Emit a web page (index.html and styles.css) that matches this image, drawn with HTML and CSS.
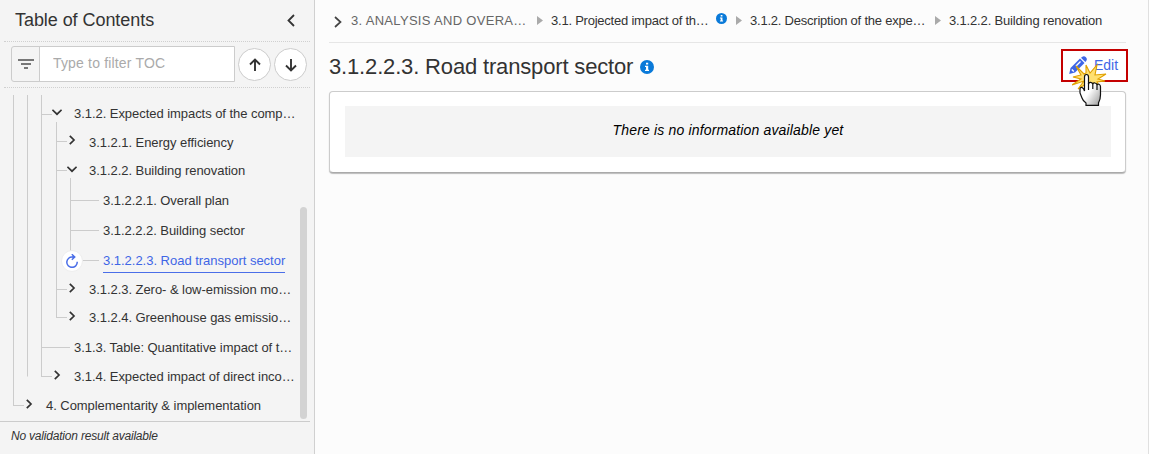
FILE: index.html
```html
<!DOCTYPE html>
<html lang="en">
<head>
    <meta charset="UTF-8">
    <meta name="viewport" content="width=device-width, initial-scale=1.0">
    <title>Road transport sector</title>
    <link rel="stylesheet" href="styles.css">
</head>
<body>
    <svg class="defs" width="0" height="0">
        <symbol id="right" viewBox="0 0 10 10"><path d="M2.8 .8 7 5 2.8 9.2" fill="none" stroke="currentColor" stroke-width="1.7"/></symbol>
        <symbol id="down" viewBox="0 0 10 10"><path d="M.4 2.8 5 7.2 9.6 2.8" fill="none" stroke="currentColor" stroke-width="1.7"/></symbol>
        <symbol id="info" viewBox="0 0 14 14"><circle cx="7" cy="7" r="7" fill="#0a7ad9"/><path d="M6 2.7h2.2v1.9H6zM5 5.7h3.2v4H9v1.2H5V9.7h1V6.9H5z" fill="#fff"/></symbol>
        <symbol id="play" viewBox="0 0 6 9"><path d="M0 0 6 4.5 0 9z" fill="#aaa"/></symbol>
    </svg>
    <div class="app">
        <aside class="sidebar">
            <div class="toc-header">
                <h2>Table of Contents</h2>
                <svg class="collapse" viewBox="0 0 8 13"><path d="M7 1 1.5 6.5 7 12" fill="none" stroke="#333" stroke-width="1.8"/></svg>
            </div>
            <div class="toc-filter">
                <div class="filter-box">
                    <span class="filter-icon">
                        <svg width="16" height="10" viewBox="0 0 16 10"><path d="M0 1h16M3 5h10M6 9h4" stroke="#777" stroke-width="1.8"/></svg>
                    </span>
                    <input type="text" placeholder="Type to filter TOC">
                </div>
                <button class="round"><svg width="14" height="14" viewBox="0 0 14 14"><path d="M7 13V1.5M2 6.5l5-5 5 5" fill="none" stroke="#333" stroke-width="1.9"/></svg></button>
                <button class="round"><svg width="14" height="14" viewBox="0 0 14 14"><path d="M7 1v11.5M2 7.5l5 5 5-5" fill="none" stroke="#333" stroke-width="1.9"/></svg></button>
            </div>
            <div class="toc-body">
                <div class="tree">
                    <div class="row first"><i class="g line"></i><i class="g line"></i><i class="g tee"></i><span class="arrow open"><svg><use href="#down"/></svg></span><span class="label">3.1.2. Expected impacts of the comp…</span></div>
                    <div class="row"><i class="g line"></i><i class="g line"></i><i class="g line wide"></i><i class="g tee"></i><span class="arrow"><svg><use href="#right"/></svg></span><span class="label low">3.1.2.1. Energy efficiency</span></div>
                    <div class="row"><i class="g line"></i><i class="g line"></i><i class="g line wide"></i><i class="g tee"></i><span class="arrow open inner"><svg><use href="#down"/></svg></span><span class="label">3.1.2.2. Building renovation</span></div>
                    <div class="row leaf"><i class="g line"></i><i class="g line"></i><i class="g line wide"></i><i class="g line"></i><i class="g tee"></i><span class="label">3.1.2.2.1. Overall plan</span></div>
                    <div class="row leaf"><i class="g line"></i><i class="g line"></i><i class="g line wide"></i><i class="g line"></i><i class="g tee"></i><span class="label">3.1.2.2.2. Building sector</span></div>
                    <div class="row leaf"><i class="g line"></i><i class="g line"></i><i class="g line wide"></i><i class="g line"></i><i class="g end"></i><span class="label active">3.1.2.2.3. Road transport sector</span>
                        <span class="reload"><svg width="14" height="14" viewBox="0 0 14 14"><path d="M7.6 3A5.2 5.2 0 1 0 12.2 7.8" fill="none" stroke="#4a6ee8" stroke-width="1.5"/><path d="M6.8.2 9.8 3 6.8 5.8M9.4 3H7" fill="none" stroke="#4a6ee8" stroke-width="1.4"/></svg></span>
                    </div>
                    <div class="row short"><i class="g line"></i><i class="g line"></i><i class="g line wide"></i><i class="g tee"></i><span class="arrow"><svg><use href="#right"/></svg></span><span class="label">3.1.2.3. Zero- &amp; low-emission mo…</span></div>
                    <div class="row"><i class="g line"></i><i class="g line"></i><i class="g line wide"></i><i class="g end"></i><span class="arrow"><svg><use href="#right"/></svg></span><span class="label">3.1.2.4. Greenhouse gas emissio…</span></div>
                    <div class="row leaf"><i class="g line"></i><i class="g line"></i><i class="g tee"></i><span class="label">3.1.3. Table: Quantitative impact of t…</span></div>
                    <div class="row"><i class="g line"></i><i class="g line half"></i><i class="g end"></i><span class="arrow"><svg><use href="#right"/></svg></span><span class="label">3.1.4. Expected impact of direct inco…</span></div>
                    <div class="row short"><i class="g end"></i><span class="arrow"><svg><use href="#right"/></svg></span><span class="label">4. Complementarity &amp; implementation</span></div>
                </div>
                <div class="scrollbar"></div>
            </div>
            <div class="validation">No validation result available</div>
        </aside>

        <main class="content">
            <nav class="breadcrumb">
                <svg class="crumb-open" viewBox="0 0 8 12"><path d="M1 1l5.5 5L1 11" fill="none" stroke="#444" stroke-width="1.7"/></svg>
                <span class="crumb root">3. ANALYSIS AND OVERA…</span>
                <svg class="play"><use href="#play"/></svg>
                <span class="crumb second">3.1. Projected impact of th…</span>
                <svg class="info-small"><use href="#info"/></svg>
                <svg class="play"><use href="#play"/></svg>
                <span class="crumb third">3.1.2. Description of the expe…</span>
                <svg class="play"><use href="#play"/></svg>
                <span class="crumb">3.1.2.2. Building renovation</span>
            </nav>
            <div class="title-bar">
                <h1>3.1.2.2.3. Road transport sector</h1>
                <svg class="info"><use href="#info"/></svg>
                <a class="edit" href="#">
                    <svg width="19" height="19" viewBox="0 0 19 19"><path d="M1.5 12 11 2.5 15.5 7 6 16.5 .2 18z" fill="#3f66e6"/><path d="M12 1.8 13 .9q2-1.6 3.9.3 1.8 1.9.3 3.8L16.3 6z" fill="#3f66e6"/><path d="M7 10l4.5-4.5M2.8 13.4l2 2" stroke="#fff" stroke-width="1.4"/></svg>
                    <span>Edit</span>
                </a>
                <svg class="pointer" width="38" height="54" viewBox="0 0 38 54">
                    <defs><linearGradient id="hand" x1="0" y1="0" x2="1" y2="1"><stop offset=".5" stop-color="#fff"/><stop offset="1" stop-color="#999"/></linearGradient></defs>
                    <path d="M12 17 4 9 9 18 1 20 9 22 0 28 12 24 6 32 14 27 12 35 17 29 22 26 28 31 25 25 33 24 26 22 34 17 23 18 25 8 18 16 14 8 14 16z" fill="#ffe070" stroke="#e0a000" stroke-width="1.1"/>
                    <path d="M12.5 34V20q0-2.500 2-2.500t2 2.500v7q.5-2 2.300-1.600 1.700.3 2 1.800.5-1.700 2.200-1.200 1.800.4 2 2 .4-1.200 2-.7 1.500.6 1.500 2.500v8q0 5-2 8v2.500H14V46q-3-2-4-5l-2-5V32q.5-2.500 2.500-1.200 1.500 1 2 3.200z" fill="url(#hand)" stroke="#111" stroke-width="1.2"/>
                    <path d="M16.5 26v7M20.8 27v5M25 28v5" stroke="#111" stroke-width="1.2" fill="none"/>
                </svg>
            </div>
            <section class="card">
                <div class="empty">There is no information available yet</div>
            </section>
        </main>
    </div>
</body>
</html>
```
FILE: styles.css
```css
* {
    box-sizing: border-box;
}

body {
    margin: 0;
    font-family: "Liberation Sans", Arial, sans-serif;
    font-size: 13px;
    color: #333;
    overflow: hidden;
}

.defs {
    display: block;
}

.app {
    display: flex;
    width: 1149px;
    height: 454px;
    background: #fcfcfc;
}

.sidebar {
    display: flex;
    flex-direction: column;
    width: 315px;
    background: #f4f4f4;
    border-right: 1px solid #d0d0d0;
}

.toc-header {
    display: flex;
    align-items: center;
    justify-content: space-between;
    height: 42px;
    margin: 0 4px;
    padding: 0 15px 0 11px;
    border-bottom: 1px dotted #d0d0d0;
}

.toc-header h2 {
    margin: 0;
    font-size: 18px;
    font-weight: normal;
    letter-spacing: -0.06px;
}

.collapse {
    width: 8px;
    height: 13px;
}

.toc-filter {
    display: flex;
    align-items: center;
    gap: 3px;
    height: 46px;
    margin: 0 4px;
    padding-left: 7px;
    border-bottom: 1px dotted #d0d0d0;
}

.filter-box {
    display: flex;
    width: 224px;
    height: 36px;
    margin-top: -1px;
    border: 1px solid #ccc;
    border-radius: 3px 0 0 3px;
}

.filter-icon {
    display: flex;
    align-items: center;
    justify-content: center;
    width: 28px;
    border-right: 1px solid #ccc;
}

.filter-box input {
    width: 194px;
    padding: 0 13px 3px;
    border: none;
    background: #fff;
    font: 14px "Liberation Sans", Arial, sans-serif;
    letter-spacing: 0.17px;
}

.filter-box input::placeholder {
    color: #aaa;
}

.round {
    display: flex;
    align-items: center;
    justify-content: center;
    width: 33px;
    height: 33px;
    padding: 0;
    border: 1px solid #ccc;
    border-radius: 50%;
    background: #fff;
}

.toc-body {
    display: flex;
    justify-content: space-between;
    height: 333px;
    padding: 7px 7px 0 0;
}

.tree {
    width: 300px;
    padding-left: 13px;
}

.row {
    position: relative;
    display: flex;
    align-items: center;
    height: 29px;
    white-space: nowrap;
}

.row.first {
    height: 32px;
    padding-top: 5px;
}

.row.short {
    height: 28px;
}

.row.leaf {
    height: 30px;
}

/* guide lines of the tree */
.g {
    flex: none;
    align-self: stretch;
    width: 14px;
    background: linear-gradient(#ccc, #ccc) 0 0 / 1px 100% no-repeat;
}

.g.wide {
    width: 15px;
}

.g.half {
    background-size: 1px 50%;
}

.g.tee,
.g.end {
    width: 11px;
    background: linear-gradient(#ccc, #ccc) 0 0 / 1px 100% no-repeat,
        linear-gradient(#ccc, #ccc) 0 50% / 100% 1px no-repeat;
}

.g.end {
    background-size: 1px 50%, 100% 1px;
}

.leaf .tee,
.leaf .end {
    width: 29px;
}

.first .g {
    margin-top: -5px;
}

.first .g.tee {
    background-position: 0 0, 0 19px;
}

.arrow {
    flex: none;
    align-self: stretch;
    display: flex;
    align-items: center;
    width: 18px;
    padding-bottom: 3px;
}

.arrow svg {
    width: 10px;
    height: 10px;
}

.arrow.open {
    background: linear-gradient(#ccc, #ccc) 4px 22px / 1px 100% no-repeat;
}

.arrow.inner {
    background-position: 3px 22px;
}

.label {
    margin-left: 4px;
    letter-spacing: -0.05px;
}

.label.low {
    padding-top: 2px;
}

.label.active {
    align-self: stretch;
    height: 28px;
    line-height: 31px;
    color: #3f66e6;
    border-bottom: 1px solid #4a6ee8;
    letter-spacing: -0.02px;
}

.reload {
    position: absolute;
    left: 61px;
    top: 5px;
    display: flex;
    align-items: center;
    justify-content: center;
    width: 22px;
    height: 22px;
    margin-left: -13px;
    border: 1px solid #eee;
    border-radius: 50%;
    background: #fff;
}

.scrollbar {
    width: 7px;
    height: 212px;
    margin-top: 112px;
    border-radius: 4px;
    background: #d3d3d3;
}

.validation {
    width: 310px;
    padding: 7px 11px;
    border-top: 1px solid #ccc;
    font-size: 12px;
    font-style: italic;
    letter-spacing: -0.2px;
}

.content {
    width: 834px;
    padding: 0 22px 0 14px;
    border-right: 1px solid #e0e0e0;
}

.breadcrumb {
    display: flex;
    align-items: center;
    height: 43px;
    padding: 0 0 2px 5px;
    border-bottom: 1px solid #e6e6e6;
    white-space: nowrap;
}

.breadcrumb > * {
    flex: none;
}

.crumb {
    letter-spacing: -0.16px;
}

.crumb-open {
    width: 8px;
    height: 12px;
    margin: 3px 9px 0 0;
}

.crumb.root {
    width: 186px;
    color: #666;
    letter-spacing: 0.31px;
}

.crumb.second {
    width: 165px;
    letter-spacing: -0.23px;
}

.crumb.third {
    width: 185px;
    letter-spacing: -0.22px;
}

.play {
    width: 6px;
    height: 9px;
    margin: 1px 8px 0 0;
}

.info-small {
    width: 11px;
    height: 11px;
    margin: 0 9px 3px 0;
}

.title-bar {
    position: relative;
    display: flex;
    align-items: center;
    height: 48px;
}

.title-bar h1 {
    margin: 0;
    font-size: 22px;
    font-weight: normal;
    letter-spacing: -0.16px;
}

.info {
    width: 14px;
    height: 14px;
    margin-left: 7px;
}

.edit {
    display: flex;
    align-items: center;
    gap: 6px;
    width: 67px;
    height: 33px;
    margin: -3px -2px 0 auto;
    padding: 0 0 1px 6px;
    border: 2px solid #c40000;
    background: #fff;
    color: #3f66e6;
    font-size: 14px;
    text-decoration: none;
}

.pointer {
    position: absolute;
    left: 743px;
    top: 14px;
}

.card {
    height: 82px;
    padding: 14px;
    padding-left: 15px;
    border: 1px solid #ccc;
    border-bottom-color: #aaa;
    border-radius: 4px;
    background: #fff;
    box-shadow: 0 1px 1px #bbb;
}

.empty {
    height: 51px;
    line-height: 49px;
    background: #f4f4f4;
    color: #000;
    font-size: 14px;
    font-style: italic;
    letter-spacing: 0.16px;
    text-align: center;
}
```
